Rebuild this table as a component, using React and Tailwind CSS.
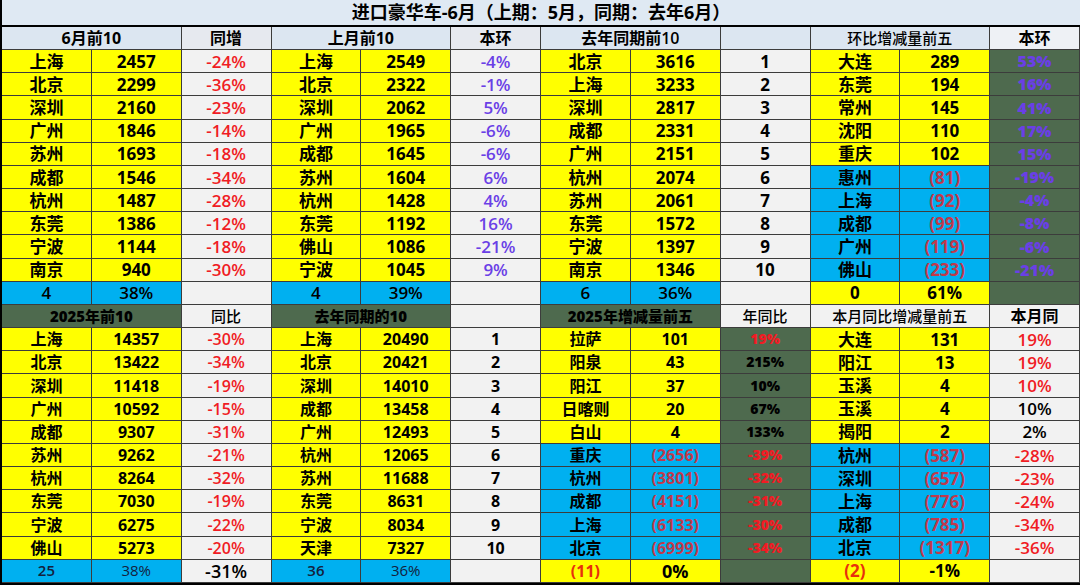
import React from "react";

const Y = "bg-[#ffff00]";
const L = "bg-[#f2f2f2]";
const B = "bg-[#00b0f0]";
const D = "bg-[#4e6a4e]";
const H = "bg-[#dce6f1]";
const HW = "bg-[#eef1f5]";

const RED = "text-[#f01c24]";
const PUR = "text-[#6a3fe6]";
const DRED = "text-[#c0394b]";
const ORG = "text-[#e8300c]";
const BLK = "text-black";
const NAVY = "text-[#14213d]";

function Cell({ t = "", bg, color = BLK, w = "font-bold", size = "text-[17px]", span = "" }) {
  return (
    <div
      className={`flex items-center justify-center overflow-hidden whitespace-nowrap border-r border-b border-[#3c3c3c] leading-none ${span} ${bg} ${color} ${w} ${size}`}
    >
      {t}
    </div>
  );
}

const top = [
  ["上海", "2457", "-24%", "上海", "2549", "-4%", "北京", "3616", "1", "大连", "289", "53%"],
  ["北京", "2299", "-36%", "北京", "2322", "-1%", "上海", "3233", "2", "东莞", "194", "16%"],
  ["深圳", "2160", "-23%", "深圳", "2062", "5%", "深圳", "2817", "3", "常州", "145", "41%"],
  ["广州", "1846", "-14%", "广州", "1965", "-6%", "成都", "2331", "4", "沈阳", "110", "17%"],
  ["苏州", "1693", "-18%", "成都", "1645", "-6%", "广州", "2151", "5", "重庆", "102", "15%"],
  ["成都", "1546", "-34%", "苏州", "1604", "6%", "杭州", "2074", "6", "惠州", "(81)", "-19%"],
  ["杭州", "1487", "-28%", "杭州", "1428", "4%", "苏州", "2061", "7", "上海", "(92)", "-4%"],
  ["东莞", "1386", "-12%", "东莞", "1192", "16%", "东莞", "1572", "8", "成都", "(99)", "-8%"],
  ["宁波", "1144", "-18%", "佛山", "1086", "-21%", "宁波", "1397", "9", "广州", "(119)", "-6%"],
  ["南京", "940", "-30%", "宁波", "1045", "9%", "南京", "1346", "10", "佛山", "(233)", "-21%"],
];

const bottom = [
  ["上海", "14357", "-30%", "上海", "20490", "1", "拉萨", "101", "19%", "大连", "131", "19%"],
  ["北京", "13422", "-34%", "北京", "20421", "2", "阳泉", "43", "215%", "阳江", "13", "19%"],
  ["深圳", "11418", "-19%", "深圳", "14010", "3", "阳江", "37", "10%", "玉溪", "4", "10%"],
  ["广州", "10592", "-15%", "成都", "13458", "4", "日喀则", "20", "67%", "玉溪", "4", "10%"],
  ["成都", "9307", "-31%", "广州", "12493", "5", "白山", "4", "133%", "揭阳", "2", "2%"],
  ["苏州", "9262", "-21%", "杭州", "12065", "6", "重庆", "(2656)", "-39%", "杭州", "(587)", "-28%"],
  ["杭州", "8264", "-32%", "苏州", "11688", "7", "杭州", "(3801)", "-32%", "深圳", "(657)", "-23%"],
  ["东莞", "7030", "-19%", "东莞", "8631", "8", "成都", "(4151)", "-31%", "上海", "(776)", "-24%"],
  ["宁波", "6275", "-22%", "宁波", "8034", "9", "上海", "(6133)", "-30%", "成都", "(785)", "-34%"],
  ["佛山", "5273", "-20%", "天津", "7327", "10", "北京", "(6999)", "-34%", "北京", "(1317)", "-36%"],
];

export default function App() {
  const s = "text-[16px]";
  return (
    <div className="w-[1080px] h-[585px] bg-white font-['Open_Sans','Noto_Sans_CJK_SC',sans-serif]">
      <div className="grid h-full grid-cols-12 grid-rows-[27px_repeat(24,minmax(0,1fr))] border-l-2 border-b-2 border-black">
        <div className="col-span-12 flex items-center justify-center border-b-2 border-black bg-[#dfe9f3] text-[18px] font-bold text-black">
          进口豪华车-6月（上期：5月，同期：去年6月）
        </div>

        {/* top header */}
        <Cell t="6月前10" bg={H} span="col-span-2" size={s} />
        <Cell t="同增" bg="bg-[#e6e9ef]" size={s} w="font-semibold" />
        <Cell t="上月前10" bg={H} span="col-span-2" size={s} />
        <Cell t="本环" bg="bg-[#e6e9ef]" size={s} w="font-semibold" />
        <Cell t="去年同期前10" bg={H} span="col-span-2" size={s} w="font-semibold" />
        <Cell bg={H} />
        <Cell t="环比增减量前五" bg={H} span="col-span-2" size="text-[15px]" w="font-medium" />
        <Cell t="本环" bg={HW} size={s} />

        {top.map((r, i) => {
          const neg = i >= 5;
          return (
            <React.Fragment key={"t" + i}>
              <Cell t={r[0]} bg={Y} />
              <Cell t={r[1]} bg={Y} />
              <Cell t={r[2]} bg={L} color={RED} w="font-semibold" />
              <Cell t={r[3]} bg={Y} />
              <Cell t={r[4]} bg={Y} />
              <Cell t={r[5]} bg={L} color={PUR} w="font-semibold" />
              <Cell t={r[6]} bg={Y} />
              <Cell t={r[7]} bg={Y} />
              <Cell t={r[8]} bg={L} />
              <Cell t={r[9]} bg={neg ? B : Y} />
              <Cell t={r[10]} bg={neg ? B : Y} color={neg ? DRED : BLK} />
              <Cell t={r[11]} bg={D} color={PUR} w="font-extrabold" size="text-[16px]" />
            </React.Fragment>
          );
        })}

        {/* top summary */}
        <Cell t="4" bg={B} w="font-semibold" />
        <Cell t="38%" bg={B} w="font-semibold" />
        <Cell bg={L} />
        <Cell t="4" bg={B} w="font-semibold" />
        <Cell t="39%" bg={B} w="font-semibold" />
        <Cell bg={L} />
        <Cell t="6" bg={B} w="font-semibold" />
        <Cell t="36%" bg={B} w="font-semibold" />
        <Cell bg={L} />
        <Cell t="0" bg={Y} />
        <Cell t="61%" bg={Y} />
        <Cell bg={D} />

        {/* bottom header */}
        <Cell t="2025年前10" bg={D} span="col-span-2" size="text-[15px]" w="font-extrabold" />
        <Cell t="同比" bg={L} size="text-[15px]" w="font-medium" />
        <Cell t="去年同期的10" bg={D} span="col-span-2" size="text-[15px]" w="font-extrabold" />
        <Cell bg={L} />
        <Cell t="2025年增减量前五" bg={D} span="col-span-2" size="text-[15px]" w="font-extrabold" />
        <Cell t="年同比" bg={L} size="text-[15px]" w="font-medium" />
        <Cell t="本月同比增减量前五" bg={L} span="col-span-2" size="text-[15px]" w="font-medium" />
        <Cell t="本月同" bg={L} size={s} />

        {bottom.map((r, i) => {
          const neg = i >= 5;
          const pct8Red = i === 0 || neg;
          const pct11Red = i <= 2 || neg;
          return (
            <React.Fragment key={"b" + i}>
              <Cell t={r[0]} bg={Y} size={s} w="font-semibold" />
              <Cell t={r[1]} bg={Y} size={s} />
              <Cell t={r[2]} bg={L} color={RED} size={s} w="font-semibold" />
              <Cell t={r[3]} bg={Y} size={s} w="font-semibold" />
              <Cell t={r[4]} bg={Y} size={s} />
              <Cell t={r[5]} bg={L} size={s} />
              <Cell t={r[6]} bg={neg ? B : Y} size={s} w="font-semibold" />
              <Cell t={r[7]} bg={neg ? B : Y} color={neg ? DRED : BLK} size={s} />
              <Cell t={r[8]} bg={D} color={pct8Red ? RED : BLK} size="text-[14px]" w="font-extrabold" />
              <Cell t={r[9]} bg={neg ? B : Y} />
              <Cell t={r[10]} bg={neg ? B : Y} color={neg ? DRED : BLK} />
              <Cell t={r[11]} bg={L} color={pct11Red ? RED : BLK} w="font-semibold" />
            </React.Fragment>
          );
        })}

        {/* bottom summary */}
        <Cell t="25" bg={B} color={NAVY} size="text-[15px]" w="font-semibold" />
        <Cell t="38%" bg={B} color={NAVY} size="text-[15px]" w="font-medium" />
        <Cell t="-31%" bg={L} size="text-[18px]" w="font-semibold" />
        <Cell t="36" bg={B} color={NAVY} size="text-[15px]" w="font-semibold" />
        <Cell t="36%" bg={B} color={NAVY} size="text-[15px]" w="font-medium" />
        <Cell bg={L} />
        <Cell t="(11)" bg={Y} color={ORG} size={s} />
        <Cell t="0%" bg={Y} size="text-[18px]" />
        <Cell bg={D} />
        <Cell t="(2)" bg={Y} color={ORG} />
        <Cell t="-1%" bg={Y} />
        <Cell bg={L} />
      </div>
    </div>
  );
}
